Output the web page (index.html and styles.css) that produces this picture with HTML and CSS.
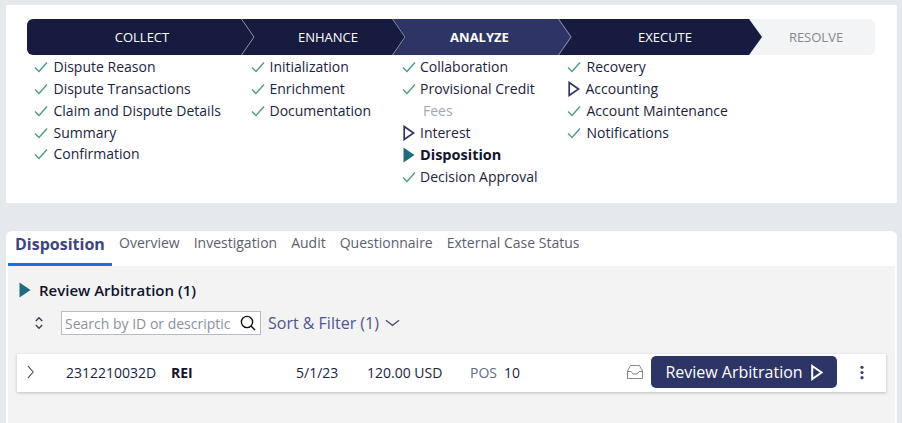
FILE: index.html
```html
<!DOCTYPE html>
<html lang="en">
<head>
<meta charset="utf-8">
<title>Disposition</title>
<link rel="stylesheet" href="styles.css">
</head>
<body>
<svg class="defs" width="0" height="0" aria-hidden="true">
  <defs>
    <symbol id="check" viewBox="0 0 14 12"><path d="M1 6.5 L5 10.5 L13 1.5" fill="none" stroke="#4f9a87" stroke-width="1.4"/></symbol>
    <symbol id="open" viewBox="0 0 12 16"><path d="M1.2 1.5 L10.6 8 L1.2 14.5 Z" fill="none" stroke="#2d3566" stroke-width="1.7"/></symbol>
    <symbol id="solid" viewBox="0 0 12 16"><path d="M0.5 0.5 L11.5 8 L0.5 15.5 Z" fill="#1f6d7c"/></symbol>
    <symbol id="chev" viewBox="0 0 14 36" preserveAspectRatio="none"><path d="M0.5 0 L13 18 L0.5 36" fill="none" stroke="#8f93a8" stroke-width="1"/></symbol>
  </defs>
</svg>
<main class="page">
  <section class="card top">
    <div class="stages">
      <div class="stage done s1">COLLECT<svg class="tip"><use href="#chev"/></svg></div>
      <div class="stage done s2">ENHANCE<svg class="tip"><use href="#chev"/></svg></div>
      <div class="stage current s3">ANALYZE<svg class="tip"><use href="#chev"/></svg></div>
      <div class="stage done s4">EXECUTE</div>
      <div class="stage todo s5">RESOLVE</div>
    </div>
    <div class="steps">
      <ul class="col c1">
        <li><svg class="ic"><use href="#check"/></svg>Dispute Reason</li>
        <li><svg class="ic"><use href="#check"/></svg>Dispute Transactions</li>
        <li><svg class="ic"><use href="#check"/></svg>Claim and Dispute Details</li>
        <li><svg class="ic"><use href="#check"/></svg>Summary</li>
        <li class="short"><svg class="ic"><use href="#check"/></svg>Confirmation</li>
      </ul>
      <ul class="col c2">
        <li><svg class="ic"><use href="#check"/></svg>Initialization</li>
        <li><svg class="ic"><use href="#check"/></svg>Enrichment</li>
        <li><svg class="ic"><use href="#check"/></svg>Documentation</li>
      </ul>
      <ul class="col c3">
        <li><svg class="ic"><use href="#check"/></svg>Collaboration</li>
        <li><svg class="ic"><use href="#check"/></svg>Provisional Credit</li>
        <li class="muted"><span class="ic"></span>Fees</li>
        <li><svg class="ic arrow"><use href="#open"/></svg>Interest</li>
        <li class="active"><svg class="ic arrow"><use href="#solid"/></svg>Disposition</li>
        <li><svg class="ic"><use href="#check"/></svg>Decision Approval</li>
      </ul>
      <ul class="col c4">
        <li><svg class="ic"><use href="#check"/></svg>Recovery</li>
        <li><svg class="ic arrow"><use href="#open"/></svg>Accounting</li>
        <li><svg class="ic"><use href="#check"/></svg>Account Maintenance</li>
        <li><svg class="ic"><use href="#check"/></svg>Notifications</li>
      </ul>
    </div>
  </section>
  <section class="card lower">
    <nav class="tabs">
      <span class="tab selected">Disposition</span>
      <span class="tab">Overview</span>
      <span class="tab">Investigation</span>
      <span class="tab">Audit</span>
      <span class="tab">Questionnaire</span>
      <span class="tab">External Case Status</span>
    </nav>
    <div class="panel">
      <h2 class="group"><svg class="group-arrow"><use href="#solid"/></svg>Review Arbitration (1)</h2>
      <div class="tools">
        <svg class="sort" viewBox="0 0 10 16"><path d="M1 5.5 L5 1.5 L9 5.5 M1 10.5 L5 14.5 L9 10.5" fill="none" stroke="#3a3f55" stroke-width="1.8"/></svg>
        <div class="search">
          <span class="placeholder">Search by ID or descriptic</span>
          <svg class="lens" viewBox="0 0 16 16"><circle cx="7" cy="7" r="5.6" fill="none" stroke="#111" stroke-width="1.4"/><path d="M11 11 L15 15" stroke="#111" stroke-width="1.4"/></svg>
        </div>
        <span class="filter">Sort &amp; Filter (1)<svg class="down" viewBox="0 0 16 8"><path d="M1 1 L8 6.5 L15 1" fill="none" stroke="#4a4f80" stroke-width="1.4"/></svg></span>
      </div>
      <div class="row">
        <svg class="expand" viewBox="0 0 8 16"><path d="M1 1 L7 8 L1 15" fill="none" stroke="#4a5270" stroke-width="1.3"/></svg>
        <span class="id">2312210032D</span>
        <strong class="code">REI</strong>
        <span class="date">5/1/23</span>
        <span class="amount">120.00 USD</span>
        <span class="pos">POS</span>
        <span class="num">10</span>
        <svg class="inbox" viewBox="0 0 16 14"><path d="M0.5 13.5 V6 L3.5 0.5 H12.5 L15.5 6 V13.5 Z M0.5 6.5 H4 L6 9 H10 L12 6.5 H15.5" fill="none" stroke="#777b85" stroke-width="0.9"/></svg>
        <button class="action" type="button">Review Arbitration<svg class="action-arrow" viewBox="0 0 12 16"><path d="M1.2 1.5 L10.6 8 L1.2 14.5 Z" fill="none" stroke="#fff" stroke-width="2"/></svg></button>
        <svg class="more" viewBox="0 0 4 16"><circle cx="2" cy="2.5" r="1.7" fill="#3a4378"/><circle cx="2" cy="8" r="1.7" fill="#3a4378"/><circle cx="2" cy="13.5" r="1.7" fill="#3a4378"/></svg>
      </div>
    </div>
  </section>
</main>
</body>
</html>
```
FILE: styles.css
```css
* { box-sizing: border-box; }
html, body { margin: 0; height: 100%; overflow: hidden; }
body { background: #e5e9ec; font-family: "Open Sans", sans-serif; color: #1c2340; font-size: 14px; }
.defs { position: absolute; }
.page { padding: 5px 5px 0 6px; display: flex; flex-direction: column; gap: 28px; }
.card { background: #fff; }
.top { height: 198px; padding: 14px 22px 0 21px; }
.stages { display: flex; height: 36px; font-size: 13px; line-height: 36px; }
.stage { position: relative; text-align: center; color: #fff; }
.stage.done { background: #161b3f; }
.stage.current { background: #2d3566; font-weight: 700; }
.stage.todo { background: #f3f4f6; color: #85888d; border-radius: 0 6px 6px 0; }
.s1 { width: 215px; padding-left: 15px; border-radius: 6px 0 0 6px; }
.s2 { width: 151px; padding-left: 21px; }
.s3 { width: 166px; padding-left: 7px; }
.s4 { width: 190px; padding-left: 22px; }
.s5 { width: 126px; padding-left: 8px; }
.tip { position: absolute; left: 100%; top: 0; width: 14px; height: 36px; margin-left: -1px; z-index: 2; }
.s1::after, .s2::after, .s3::after, .s4::after { content: ""; position: absolute; left: 100%; top: 0; width: 13px; height: 36px; z-index: 1; clip-path: polygon(0 0, 100% 50%, 0 100%); background: inherit; }
.steps { display: flex; padding-top: 1px; }
.col { list-style: none; margin: 0; padding: 0; }
.col li { display: flex; align-items: center; height: 22px; line-height: 22px; white-space: nowrap; }
.c1 { width: 216px; padding-left: 7px; }
.c2 { width: 151px; padding-left: 8px; }
.c3 { width: 165px; padding-left: 8px; }
.c4 { padding-left: 8px; }
.c1 .ic { margin-right: 5.5px; }
.c2 .ic { margin-right: 4.5px; }
.c4 .ic { margin-right: 5.5px; }
.c1 .short { margin-top: -1px; }
.ic { width: 14px; height: 12px; margin-right: 4px; flex: none; }
.col .ic.arrow { width: 12px; height: 16px; margin-left: 1px; margin-right: 5px; }
.c4 .ic.arrow { margin-right: 5.5px; }
.muted { color: #a3a6ad; padding-left: 3px; }
.active { font-weight: 700; font-size: 14.5px; color: #10142c; }
.lower { height: 192px; border-radius: 6px 6px 0 0; padding: 0 2px; }
.tabs { display: flex; height: 35px; align-items: flex-start; gap: 14px; }
.tab { color: #5b6070; line-height: 24px; }
.tab.selected { color: #3d4680; font-weight: 700; font-size: 16px; line-height: 26px; height: 35px; width: 104px; padding-left: 7px; margin-right: -7px; border-bottom: 3px solid #1a6fe6; }
.panel { background: #f3f3f4; height: 157px; padding: 14px 9px 0 9px; }
.group { display: flex; align-items: center; margin: 0 0 0 2px; font-size: 15px; font-weight: 600; line-height: 20px; color: #10142c; }
.group-arrow { width: 12px; height: 16px; margin-right: 8px; flex: none; }
.tools { display: flex; align-items: center; margin-top: 11px; padding-left: 18px; height: 24px; }
.sort { width: 8px; height: 14px; margin-right: 18px; flex: none; }
.search { display: flex; align-items: center; width: 200px; height: 24px; background: #fff; border: 1px solid #b8bcc8; padding: 0 4px 0 3px; overflow: hidden; }
.placeholder { flex: 1; color: #8d8f9e; white-space: nowrap; overflow: hidden; }
.lens { width: 16px; height: 16px; flex: none; margin-left: 7px; }
.filter { display: flex; align-items: center; margin-left: 7px; color: #4f5590; font-size: 16px; white-space: nowrap; }
.down { width: 15px; height: 8px; margin-left: 6px; }
.row { display: flex; align-items: center; height: 38px; margin-top: 19px; padding-bottom: 2px; background: #fff; box-shadow: 0 1px 3px rgba(0,0,0,.22); }
.expand { width: 7px; height: 14px; margin-left: 10px; flex: none; }
.id { margin-left: 32px; width: 105px; flex: none; }
.code { width: 125px; flex: none; color: #10142c; }
.date { width: 71px; flex: none; }
.amount { width: 103px; flex: none; }
.pos { width: 34px; flex: none; color: #666b78; }
.num { flex: 1; }
.inbox { width: 16px; height: 14px; margin-right: 8px; flex: none; }
.action { display: flex; align-items: center; justify-content: center; width: 186px; height: 32px; padding: 0; background: #2d3566; color: #fff; border: 0; border-radius: 5px; font: 16px "Open Sans", sans-serif; }
.action-arrow { width: 12px; height: 17px; margin-left: 8px; }
.more { width: 4px; height: 15px; margin: 0 22px 0 23px; flex: none; }
```
